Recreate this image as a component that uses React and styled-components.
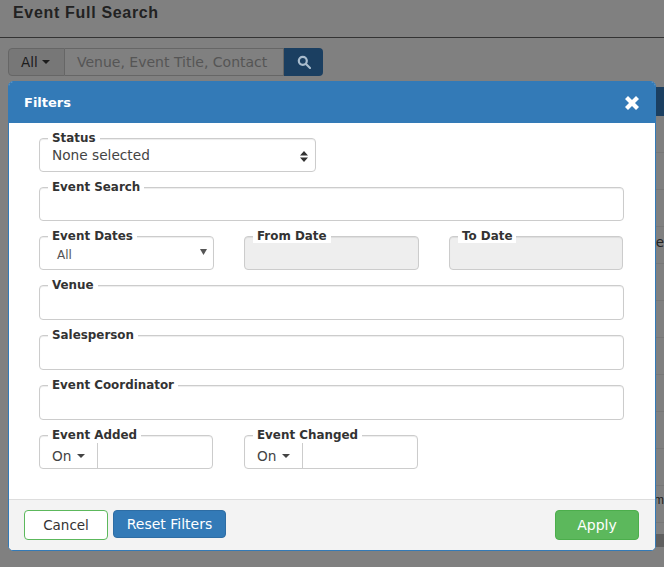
import React from 'react';
import styled, { createGlobalStyle } from 'styled-components';

const GlobalStyle = createGlobalStyle`
  html, body { margin: 0; padding: 0; }
  body { background: #808080; font-family: 'DejaVu Sans', sans-serif; }
  * { box-sizing: border-box; }
`;

const Page = styled.div`
  position: relative;
  width: 664px;
  height: 567px;
  overflow: hidden;
  background: #808080;
`;

const PageHeader = styled.header`
  height: 38px;
  padding: 4px 13px 0;
  border-bottom: 1px solid #333;
  font: bold 16px 'Liberation Sans', sans-serif;
  letter-spacing: 0.68px;
  color: #222;
`;

const SearchGroup = styled.div`
  display: flex;
  width: 315px;
  height: 28px;
  margin: 10px 0 0 8px;
`;

const AllButton = styled.div`
  display: flex;
  align-items: center;
  gap: 4px;
  width: 57px;
  padding-left: 12px;
  border: 1px solid #666;
  border-radius: 4px 0 0 4px;
  background: #777;
  font-size: 13.5px;
  color: #1c1c1c;
`;

const SearchInput = styled.div`
  width: 219px;
  padding: 5px 0 0 12px;
  border: 1px solid #666;
  border-left: 0;
  font-size: 14px;
  white-space: nowrap;
  color: #555;
`;

const SearchButton = styled.div`
  display: flex;
  flex: 1;
  align-items: center;
  justify-content: center;
  border-radius: 0 4px 4px 0;
  background: #1b3f61;
`;

const ResultsTable = styled.div`
  margin: 11px 0 0 8px;
  font-size: 13.5px;
  color: #222;
`;

const TableHead = styled.div`
  height: 29px;
  background: #1b3f61;
`;

const TableRow = styled.div`
  display: flex;
  justify-content: flex-end;
  height: 37px;
  padding-top: 7px;
  border-bottom: 1px solid #777;
  white-space: nowrap;
`;

const Cell = styled.span`
  font: ${(p) => p.$font ?? "13.5px 'DejaVu Sans', sans-serif"};
`;

const TableFoot = styled.div`
  height: 13px;
  margin-top: 11px;
  background: #5f5f5f;
`;

const Modal = styled.div`
  position: absolute;
  left: 8px;
  top: 81px;
  width: 648px;
  height: 470px;
  display: flex;
  flex-direction: column;
  overflow: hidden;
  border: 1px solid #337ab7;
  border-radius: 5px;
  background: #fff;
`;

const ModalHeader = styled.div`
  display: flex;
  flex: none;
  align-items: center;
  justify-content: space-between;
  height: 41px;
  padding: 0 16px 0 15px;
  background: #337ab7;
  color: #fff;
  font: bold 13px 'DejaVu Sans', sans-serif;
`;

const Body = styled.div`
  flex: 1;
  padding: 15px 30px 0;
`;

const Row = styled.div`
  display: flex;
  gap: 30px;
  margin-bottom: ${(p) => p.$gap ?? 15}px;
`;

const Field = styled.div`
  position: relative;
  flex: none;
  width: ${(p) => p.$width}px;
  height: ${(p) => p.$height ?? 34}px;
  margin-left: ${(p) => p.$left ?? 0}px;
  padding: 9px 12px 0;
  border: 1px solid #ccc;
  border-radius: 4px;
  background: ${(p) => (p.$disabled ? '#eee' : '#fff')};
  box-shadow: inset 0 1px 1px rgba(0, 0, 0, 0.075);
  font-size: 14px;
  color: #444;
`;

const Legend = styled.span`
  position: absolute;
  left: 8px;
  top: -8px;
  padding: 0 4px;
  background: #fff;
  font-size: 11.9px;
  font-weight: bold;
  line-height: 14px;
  white-space: nowrap;
  color: #333;
`;

const SelectText = styled.span`
  display: block;
  margin-top: ${(p) => p.$top ?? 0}px;
  margin-left: ${(p) => p.$left ?? 0}px;
  font-size: ${(p) => p.$size ?? 13.7}px;
  line-height: 14px;
  color: ${(p) => p.$color ?? '#444'};
`;

const Arrow = styled.span`
  position: absolute;
  right: ${(p) => p.$right}px;
  top: ${(p) => p.$top}px;
`;

const Addon = styled.div`
  display: flex;
  align-items: center;
  gap: 6px;
  width: 58px;
  height: 25px;
  padding-left: 12px;
  border-right: 1px solid #ccc;
  font-size: 13.7px;
  color: #444;
`;

const AddonField = styled(Field)`
  padding: 7px 0 0 0;
`;

const Footer = styled.div`
  display: flex;
  flex: none;
  align-items: flex-start;
  height: 51px;
  padding: 10px 15px 0;
  border-top: 1px solid #ddd;
  background: #f3f3f3;
`;

const Button = styled.button`
  height: ${(p) => p.$height ?? 28}px;
  width: ${(p) => p.$width}px;
  margin-left: ${(p) => p.$left ?? 0}px;
  padding: 0;
  border: 1px solid ${(p) => p.$border};
  border-radius: 4px;
  background: ${(p) => p.$bg};
  color: ${(p) => p.$color};
  font: ${(p) => p.$size ?? 14}px 'DejaVu Sans', sans-serif;
`;

const Caret = ({ color = '#444' }) => (
  <svg width="8" height="4" viewBox="0 0 8 4" style={{ display: 'block' }}>
    <path d="M0 0h8L4 4z" fill={color} />
  </svg>
);

export default function App() {
  return (
    <Page>
      <GlobalStyle />
      <PageHeader>Event Full Search</PageHeader>
      <SearchGroup>
        <AllButton>
          All <Caret color="#1c1c1c" />
        </AllButton>
        <SearchInput>Venue, Event Title, Contact</SearchInput>
        <SearchButton>
          <svg width="14" height="14" viewBox="0 0 14 14" fill="none" stroke="#a9bccd" strokeWidth="2.2">
            <circle cx="5.8" cy="5.8" r="4" />
            <path d="M9 9l4 4" strokeLinecap="round" />
          </svg>
        </SearchButton>
      </SearchGroup>

      <ResultsTable>
        <TableHead />
        <TableRow />
        <TableRow />
        <TableRow />
        <TableRow>
          <Cell>ve</Cell>
        </TableRow>
        <TableRow />
        <TableRow />
        <TableRow />
        <TableRow />
        <TableRow />
        <TableRow />
        <TableRow>
          <Cell $font="12px 'Liberation Sans', sans-serif">m</Cell>
        </TableRow>
        <TableFoot />
      </ResultsTable>

      <Modal>
        <ModalHeader>
          Filters
          <svg width="14" height="14" viewBox="0 0 14 14" fill="#fff">
            <path d="M3 0l4 4 4-4 3 3-4 4 4 4-3 3-4-4-4 4-3-3 4-4-4-4z" />
          </svg>
        </ModalHeader>
        <Body>
          <Row>
            <Field $width={277}>
              <Legend>Status</Legend>
              <SelectText>None selected</SelectText>
              <Arrow $right={7} $top={12}>
                <svg width="8" height="11" viewBox="0 0 8 11" style={{ display: 'block' }}>
                  <path d="M4 0l4 4.5H0zM0 6.5h8L4 11z" fill="#333" />
                </svg>
              </Arrow>
            </Field>
          </Row>
          <Row>
            <Field $width={585}>
              <Legend>Event Search</Legend>
            </Field>
          </Row>
          <Row>
            <Field $width={175}>
              <Legend>Event Dates</Legend>
              <SelectText $top={2} $left={5} $size={12} $color="#555">All</SelectText>
              <Arrow $right={6} $top={12}>
                <svg width="7" height="6" viewBox="0 0 7 6" style={{ display: 'block' }}>
                  <path d="M0 0h7L3.5 6z" fill="#555" />
                </svg>
              </Arrow>
            </Field>
            <Field $width={175} $disabled>
              <Legend>From Date</Legend>
            </Field>
            <Field $width={174} $disabled>
              <Legend>To Date</Legend>
            </Field>
          </Row>
          <Row>
            <Field $width={585} $height={35}>
              <Legend>Venue</Legend>
            </Field>
          </Row>
          <Row>
            <Field $width={585} $height={35}>
              <Legend>Salesperson</Legend>
            </Field>
          </Row>
          <Row>
            <Field $width={585} $height={35}>
              <Legend>Event Coordinator</Legend>
            </Field>
          </Row>
          <Row>
            <AddonField $width={174}>
              <Legend>Event Added</Legend>
              <Addon>On <Caret /></Addon>
            </AddonField>
            <AddonField $width={174} $left={1}>
              <Legend>Event Changed</Legend>
              <Addon>On <Caret /></Addon>
            </AddonField>
          </Row>
        </Body>
        <Footer>
          <Button $width={84} $height={30} $size={13.5} $border="#5cb85c" $bg="#fff" $color="#333">Cancel</Button>
          <Button $width={113} $left={5} $border="#2e6da4" $bg="#337ab7" $color="#fff">Reset Filters</Button>
          <Button $width={84} $height={30} $left={329} $border="#4cae4c" $bg="#5cb85c" $color="#fff">Apply</Button>
        </Footer>
      </Modal>
    </Page>
  );
}
